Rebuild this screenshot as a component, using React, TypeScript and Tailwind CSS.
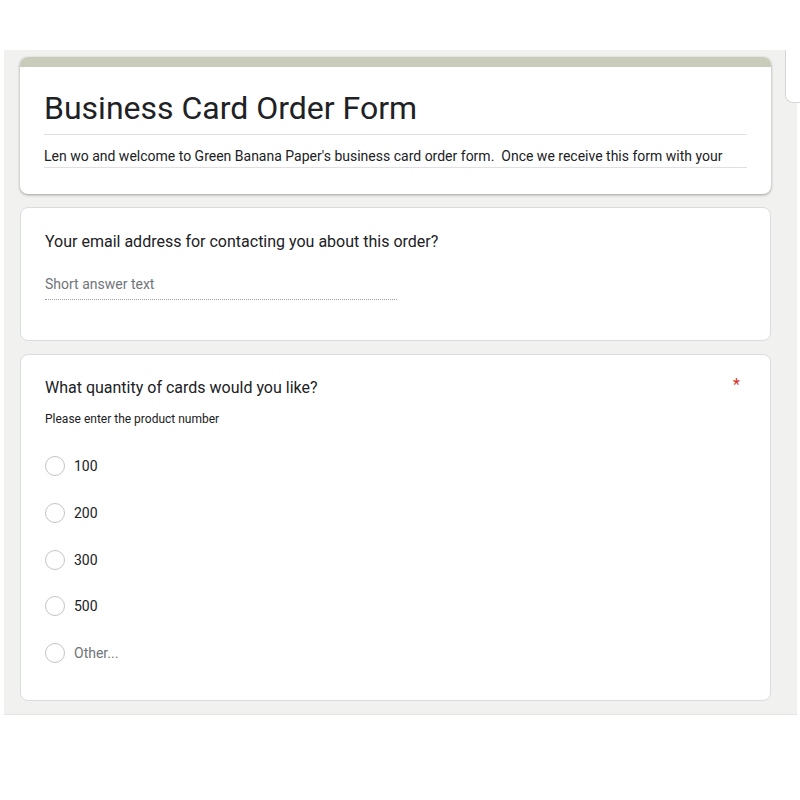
export default function App() {
  const options = ["100", "200", "300", "500"];
  return (
    <div className="min-h-screen bg-white pt-[50px] pl-1 font-['Roboto',sans-serif] text-[#202124]">
      <div className="relative w-[793px] bg-[#f1f1ef] pl-4 pr-[26px] pt-[7px] pb-[13px] flex flex-col gap-[13px]">
        {/* floating toolbar edge */}
        <div className="absolute left-[781px] top-0 w-[20px] h-[53px] bg-white border-l border-b border-[#d6d6d6] rounded-bl-lg" />

        {/* Header card */}
        <div className="bg-white rounded-lg overflow-hidden shadow-[0_1px_3px_rgba(0,0,0,0.35)]">
          <div className="h-[10px] bg-[#c9ccba]" />
          <div className="px-6 pt-[21px] pb-[26px]">
            <h1 className="text-[32px] leading-[40px] text-[#202124] pb-[6px] border-b border-[#e0e0e0]">
              Business Card Order Form
            </h1>
            <p className="mt-[11px] text-[14px] leading-[20px] pb-[1px] border-b border-[#e0e0e0] whitespace-pre">
              {"Len wo and welcome to Green Banana Paper's business card order form.  Once we receive this form with your"}
            </p>
          </div>
        </div>

        {/* Email card */}
        <div className="bg-white rounded-lg border border-[#dadce0] h-[134px] px-6 pt-[23px]">
          <div className="text-[16px] leading-[22px]">Your email address for contacting you about this order?</div>
          <div className="mt-[21px] w-[352px] text-[14px] leading-[20px] text-[#70757a] pb-[5px] border-b border-dotted border-[#9aa0a6]">
            Short answer text
          </div>
        </div>

        {/* Quantity card */}
        <div className="bg-white rounded-lg border border-[#dadce0] h-[347px] pl-6 pr-[30px] pt-[22px]">
          <div className="flex justify-between">
            <div className="text-[16px] leading-[22px]">What quantity of cards would you like?</div>
            <span className="text-[#d93025] text-[16px] leading-[16px]">*</span>
          </div>
          <div className="mt-[12px] text-[12px] leading-[16px]">Please enter the product number</div>
          <div className="mt-[29px] flex flex-col gap-[26.75px]">
            {options.map((o) => (
              <div key={o} className="flex items-center gap-[9px] h-[20px]">
                <span className="w-[20px] h-[20px] rounded-full border-[1.5px] border-[#c4c4c4]" />
                <span className="text-[14px] leading-[20px]">{o}</span>
              </div>
            ))}
            <div className="flex items-center gap-[9px] h-[20px]">
              <span className="w-[20px] h-[20px] rounded-full border-[1.5px] border-[#c4c4c4]" />
              <span className="text-[14px] leading-[20px] text-[#70757a]">Other...</span>
            </div>
          </div>
        </div>
      </div>
      <div className="h-[1px] w-[793px] bg-[#e4e4e2]" />
    </div>
  );
}
